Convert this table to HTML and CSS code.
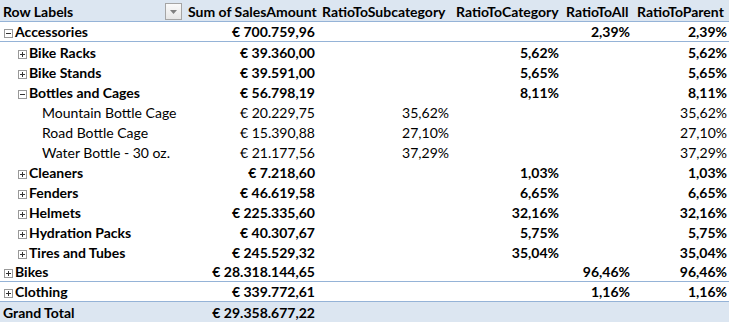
FILE: index.html
```html
<!DOCTYPE html>
<html>
<head>
<meta charset="utf-8">
<link rel="stylesheet" href="styles.css">
</head>
<body>
<table class="pivot">
  <colgroup>
    <col class="c1"><col class="c2"><col class="c3"><col class="c4"><col class="c5"><col class="c6">
  </colgroup>
  <thead>
    <tr class="hdr">
      <th class="lbl-h"><div class="hwrap"><span class="htxt">Row Labels</span><span class="filter"><svg width="7" height="4" viewBox="0 0 7 4"><path d="M0 0h7L3.5 4z" fill="#7f7f7f"/></svg></span></div></th>
      <th>Sum of SalesAmount</th>
      <th>RatioToSubcategory</th>
      <th>RatioToCategory</th>
      <th>RatioToAll</th>
      <th>RatioToParent</th>
    </tr>
  </thead>
  <tbody>
    <tr class="b sep">
      <td class="l1"><span class="tg"><svg width="9" height="9" viewBox="0 0 9 9"><rect x="0.5" y="0.5" width="8" height="8" fill="#fff" stroke="#999"/><path d="M2 4.5h5" stroke="#333"/></svg></span>Accessories</td>
      <td>€ 700.759,96</td><td></td><td></td><td>2,39%</td><td>2,39%</td>
    </tr>
    <tr class="b">
      <td class="l2"><span class="tg"><svg width="9" height="9" viewBox="0 0 9 9"><rect x="0.5" y="0.5" width="8" height="8" fill="#fff" stroke="#999"/><path d="M2 4.5h5M4.5 2v5" stroke="#333"/></svg></span>Bike Racks</td>
      <td>€ 39.360,00</td><td></td><td>5,62%</td><td></td><td>5,62%</td>
    </tr>
    <tr class="b">
      <td class="l2"><span class="tg"><svg width="9" height="9" viewBox="0 0 9 9"><rect x="0.5" y="0.5" width="8" height="8" fill="#fff" stroke="#999"/><path d="M2 4.5h5M4.5 2v5" stroke="#333"/></svg></span>Bike Stands</td>
      <td>€ 39.591,00</td><td></td><td>5,65%</td><td></td><td>5,65%</td>
    </tr>
    <tr class="b">
      <td class="l2"><span class="tg"><svg width="9" height="9" viewBox="0 0 9 9"><rect x="0.5" y="0.5" width="8" height="8" fill="#fff" stroke="#999"/><path d="M2 4.5h5" stroke="#333"/></svg></span>Bottles and Cages</td>
      <td>€ 56.798,19</td><td></td><td>8,11%</td><td></td><td>8,11%</td>
    </tr>
    <tr>
      <td class="l3">Mountain Bottle Cage</td>
      <td>€ 20.229,75</td><td>35,62%</td><td></td><td></td><td>35,62%</td>
    </tr>
    <tr>
      <td class="l3">Road Bottle Cage</td>
      <td>€ 15.390,88</td><td>27,10%</td><td></td><td></td><td>27,10%</td>
    </tr>
    <tr>
      <td class="l3">Water Bottle - 30 oz.</td>
      <td>€ 21.177,56</td><td>37,29%</td><td></td><td></td><td>37,29%</td>
    </tr>
    <tr class="b">
      <td class="l2"><span class="tg"><svg width="9" height="9" viewBox="0 0 9 9"><rect x="0.5" y="0.5" width="8" height="8" fill="#fff" stroke="#999"/><path d="M2 4.5h5M4.5 2v5" stroke="#333"/></svg></span>Cleaners</td>
      <td>€ 7.218,60</td><td></td><td>1,03%</td><td></td><td>1,03%</td>
    </tr>
    <tr class="b">
      <td class="l2"><span class="tg"><svg width="9" height="9" viewBox="0 0 9 9"><rect x="0.5" y="0.5" width="8" height="8" fill="#fff" stroke="#999"/><path d="M2 4.5h5M4.5 2v5" stroke="#333"/></svg></span>Fenders</td>
      <td>€ 46.619,58</td><td></td><td>6,65%</td><td></td><td>6,65%</td>
    </tr>
    <tr class="b">
      <td class="l2"><span class="tg"><svg width="9" height="9" viewBox="0 0 9 9"><rect x="0.5" y="0.5" width="8" height="8" fill="#fff" stroke="#999"/><path d="M2 4.5h5M4.5 2v5" stroke="#333"/></svg></span>Helmets</td>
      <td>€ 225.335,60</td><td></td><td>32,16%</td><td></td><td>32,16%</td>
    </tr>
    <tr class="b">
      <td class="l2"><span class="tg"><svg width="9" height="9" viewBox="0 0 9 9"><rect x="0.5" y="0.5" width="8" height="8" fill="#fff" stroke="#999"/><path d="M2 4.5h5M4.5 2v5" stroke="#333"/></svg></span>Hydration Packs</td>
      <td>€ 40.307,67</td><td></td><td>5,75%</td><td></td><td>5,75%</td>
    </tr>
    <tr class="b">
      <td class="l2"><span class="tg"><svg width="9" height="9" viewBox="0 0 9 9"><rect x="0.5" y="0.5" width="8" height="8" fill="#fff" stroke="#999"/><path d="M2 4.5h5M4.5 2v5" stroke="#333"/></svg></span>Tires and Tubes</td>
      <td>€ 245.529,32</td><td></td><td>35,04%</td><td></td><td>35,04%</td>
    </tr>
    <tr class="b sep">
      <td class="l1"><span class="tg"><svg width="9" height="9" viewBox="0 0 9 9"><rect x="0.5" y="0.5" width="8" height="8" fill="#fff" stroke="#999"/><path d="M2 4.5h5M4.5 2v5" stroke="#333"/></svg></span>Bikes</td>
      <td>€ 28.318.144,65</td><td></td><td></td><td>96,46%</td><td>96,46%</td>
    </tr>
    <tr class="b sep">
      <td class="l1"><span class="tg"><svg width="9" height="9" viewBox="0 0 9 9"><rect x="0.5" y="0.5" width="8" height="8" fill="#fff" stroke="#999"/><path d="M2 4.5h5M4.5 2v5" stroke="#333"/></svg></span>Clothing</td>
      <td>€ 339.772,61</td><td></td><td></td><td>1,16%</td><td>1,16%</td>
    </tr>
    <tr class="b total">
      <td class="l0">Grand Total</td>
      <td>€ 29.358.677,22</td><td></td><td></td><td></td><td></td>
    </tr>
  </tbody>
</table>
</body>
</html>
```

FILE: styles.css
```css
html, body {
  margin: 0;
  padding: 0;
  background: #ffffff;
}

.pivot {
  border-collapse: collapse;
  table-layout: fixed;
  width: 729px;
  font-family: "Lato", "Open Sans", sans-serif;
  font-size: 14px;
  line-height: 17px;
  color: #000;
}

.c1 { width: 183px; }
.c2 { width: 134px; }
.c3 { width: 134px; }
.c4 { width: 110px; }
.c5 { width: 71px; }
.c6 { width: 97px; }

.pivot th,
.pivot td {
  padding: 0 2px 1px 0;
  white-space: nowrap;
  overflow: hidden;
  vertical-align: bottom;
}

.hdr th {
  height: 20px;
  background: #dce6f1;
  border-bottom: 1px solid #95b3d7;
  text-align: left;
  font-weight: 700;
  padding-left: 5px;
}

.hdr th.lbl-h {
  padding-left: 3px;
  padding-right: 1px;
  padding-bottom: 0;
}

.hwrap {
  display: flex;
  align-items: flex-end;
  justify-content: space-between;
}

.htxt { padding-bottom: 1px; }

.filter {
  width: 15px;
  height: 15px;
  margin-bottom: 1px;
  border: 1px solid #a5a5a5;
  background: linear-gradient(#fafafa, #e6e6e6);
  display: flex;
  align-items: center;
  justify-content: center;
}

.pivot td {
  height: 19px;
  text-align: right;
}

.pivot tr.b td { font-weight: 700; }

.pivot tr.sep td { border-bottom: 1px solid #95b3d7; height: 18px; }

.pivot td.l0,
.pivot td.l1,
.pivot td.l2,
.pivot td.l3 { text-align: left; }

.l0 { padding-left: 3px !important; }
.l1 { padding-left: 4px !important; }
.l2 { padding-left: 18px !important; }
.l3 { padding-left: 42px !important; }

.tg {
  display: inline-block;
  width: 11px;
  vertical-align: -1px;
}
.tg svg { display: block; }

.total td {
  background: #dce6f1;
}
```
